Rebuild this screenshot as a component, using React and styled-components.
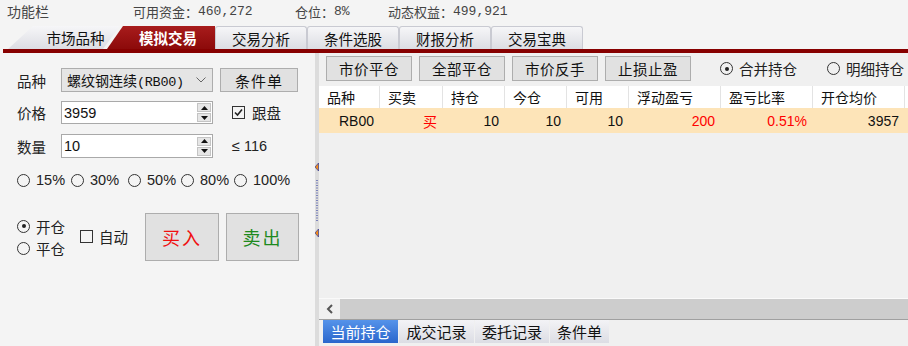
import styled, { createGlobalStyle, css } from "styled-components";

const GlobalStyle = createGlobalStyle`
  html, body { margin: 0; padding: 0; background: #f4f4f4; }
  body { font-family: "Noto Sans CJK SC", "Liberation Sans", sans-serif; color: #111; }
`;

const Page = styled.div`
  width: 908px;
  height: 346px;
  overflow: hidden;
  display: flex;
  flex-direction: column;
  background: #f4f4f4;
`;

/* ---- top info bar ---- */
const TopBar = styled.div`
  height: 22px;
  display: flex;
  align-items: center;
  padding-left: 7px;
  font-size: 13px;
  color: #444;
`;
const TopItem = styled.div`
  width: ${(p) => (p.$w ? p.$w + "px" : "auto")};
  font-size: ${(p) => p.$fs || 13}px;
  white-space: nowrap;
  display: flex;
  align-items: center;
`;
const Num = styled.span`
  font-family: "Liberation Mono", monospace;
  font-size: 13px;
  color: #444;
`;

/* ---- main tabs ---- */
const TabStrip = styled.div`
  margin: 4px 0 0 3px;
  padding-left: 5px;
  height: 23px;
  display: flex;
  align-items: stretch;
  border-bottom: 4px solid #870000;
`;
const Tab = styled.div`
  display: flex;
  align-items: center;
  justify-content: center;
  font-size: 14.5px;
  color: #111;
  width: ${(p) => p.$w}px;
  box-sizing: border-box;
  background: linear-gradient(#f6f6f8, #dcdde3);
  border: 1px solid #c9cad2;
  border-bottom: none;
  border-radius: 3px 3px 0 0;
  ${(p) =>
    p.$first &&
    css`
      border: none;
      border-radius: 0;
      padding-left: 20px;
      clip-path: polygon(25px 0, 112px 0, 95px 100%, 0 100%);
    `}
  ${(p) =>
    p.$active &&
    css`
      border: none;
      border-radius: 0;
      margin-left: -16px;
      padding-left: 14px;
      color: #fff;
      font-weight: bold;
      background: linear-gradient(#a81c1c, #8c0a0a);
      clip-path: polygon(16px 0, 100% 0, 100% 100%, 0 100%);
    `}
`;

/* ---- body ---- */
const Main = styled.div`
  flex: 1;
  display: flex;
  min-height: 0;
`;

const LeftPanel = styled.div`
  width: 315px;
  box-sizing: border-box;
  padding: 15px 0 0 17px;
  background: #f4f4f4;
  display: flex;
  flex-direction: column;
`;
const Row = styled.div`
  display: flex;
  align-items: ${(p) => p.$align || "center"};
  height: ${(p) => p.$h}px;
  margin-top: ${(p) => p.$mt || 0}px;
`;
const Label = styled.div`
  width: 44px;
  font-size: 14.5px;
  color: #222;
`;
const Select = styled.div`
  width: 152px;
  height: 24px;
  box-sizing: border-box;
  border: 1px solid #adadad;
  background: #e5e5e5;
  display: flex;
  align-items: center;
  justify-content: space-between;
  padding: 0 6px 0 5px;
  font-size: 14px;
  color: #111;
`;
const Code = styled.span`
  font-family: "Liberation Mono", monospace;
  font-size: 13.5px;
  letter-spacing: -0.3px;
`;
const Field = styled.div`
  width: 152px;
  height: ${(p) => p.$h}px;
  box-sizing: border-box;
  border: 1px solid #a9a9a9;
  background: #fff;
  display: flex;
  align-items: center;
  justify-content: space-between;
  padding: 0 1px 0 2px;
  font-family: "Liberation Sans", sans-serif;
  font-size: 14.5px;
  color: #111;
`;
const Spin = styled.div`
  width: 14px;
  height: 19px;
  display: flex;
  flex-direction: column;
  gap: 1px;
`;
const SpinBtn = styled.div`
  flex: 1;
  background: #e6e6e6;
  border: 1px solid #c4c4c4;
  display: flex;
  align-items: center;
  justify-content: center;
`;
const Button = styled.div`
  box-sizing: border-box;
  width: ${(p) => p.$w}px;
  height: ${(p) => p.$h}px;
  margin-left: ${(p) => p.$ml || 0}px;
  margin-right: ${(p) => p.$mr || 0}px;
  border: 1px solid #adadad;
  background: #e1e1e1;
  display: flex;
  align-items: center;
  justify-content: center;
  font-size: ${(p) => p.$fs || 15}px;
  color: ${(p) => p.$color || "#111"};
  letter-spacing: ${(p) => p.$ls || 0}px;
  flex-shrink: 0;
`;
const Side = styled.div`
  margin-left: 19px;
  display: flex;
  align-items: center;
  gap: 7px;
  font-size: 14.5px;
  color: #222;
  font-family: "Liberation Sans", "Noto Sans CJK SC", sans-serif;
`;
const Option = styled.div`
  display: flex;
  align-items: center;
  gap: 6px;
  width: ${(p) => (p.$w ? p.$w + "px" : "auto")};
  height: ${(p) => (p.$h ? p.$h + "px" : "auto")};
  margin-top: ${(p) => p.$mt || 0}px;
  font-size: 14.5px;
  color: #222;
  font-family: "Liberation Sans", "Noto Sans CJK SC", sans-serif;
  flex-shrink: 0;
`;
const Circle = styled.span`
  width: 11px;
  height: 11px;
  border: 1px solid #333;
  border-radius: 50%;
  display: flex;
  align-items: center;
  justify-content: center;
  flex-shrink: 0;
  &::after {
    content: "";
    width: 4px;
    height: 4px;
    border-radius: 50%;
    background: ${(p) => (p.$on ? "#222" : "transparent")};
  }
`;
const Box = styled.span`
  width: 11px;
  height: 11px;
  border: 1px solid #333;
  display: flex;
  align-items: center;
  justify-content: center;
  flex-shrink: 0;
`;
const RadioCol = styled.div`
  width: 63px;
  padding-top: 2px;
  display: flex;
  flex-direction: column;
`;

const Divider = styled.div`
  width: 4px;
  background: #dcdcdc;
  flex-shrink: 0;
  display: flex;
  flex-direction: column;
`;

/* ---- right panel ---- */
const RightPanel = styled.div`
  flex: 1;
  background: #f0f0f0;
  display: flex;
  flex-direction: column;
  min-width: 0;
`;
const Toolbar = styled.div`
  height: 33px;
  box-sizing: border-box;
  padding: 3px 0 0 7px;
  display: flex;
  align-items: flex-start;
`;
const ToolRadios = styled.div`
  display: flex;
  align-items: center;
  height: 25px;
  margin-left: 29px;
`;
const TableRow = styled.div`
  display: flex;
  height: ${(p) => p.$h}px;
  background: ${(p) => p.$bg};
`;
const HeadCell = styled.div`
  width: ${(p) => p.$w}px;
  box-sizing: border-box;
  border-right: 1px solid #e3e3e3;
  padding-left: 8px;
  display: flex;
  align-items: center;
  font-size: 14px;
  color: #111;
  flex-shrink: 0;
`;
const Cell = styled.div`
  width: ${(p) => p.$w}px;
  box-sizing: border-box;
  padding-right: 6px;
  display: flex;
  align-items: center;
  justify-content: flex-end;
  font-family: "Liberation Sans", "Noto Sans CJK SC", sans-serif;
  font-size: 14px;
  color: ${(p) => (p.$red ? "#ff0000" : "#111")};
  flex-shrink: 0;
`;
const Spacer = styled.div`
  flex: ${(p) => p.$fixed ? `0 0 ${p.$fixed}px` : 1};
`;
const ScrollBar = styled.div`
  height: 22px;
  box-sizing: border-box;
  display: flex;
  border-top: 1px solid #fafafa;
  border-bottom: 1px solid #a0a0a0;
`;
const ScrollArrow = styled.div`
  width: 21px;
  background: #f0f0f0;
  display: flex;
  align-items: center;
  justify-content: center;
`;
const ScrollTrack = styled.div`
  flex: 1;
  background: #cdcdcd;
`;
const BottomTabs = styled.div`
  height: 23px;
  display: flex;
  padding-left: 4px;
  gap: 1px;
`;
const BottomTab = styled.div`
  width: ${(p) => p.$w}px;
  display: flex;
  align-items: center;
  justify-content: center;
  font-size: 15px;
  color: ${(p) => (p.$active ? "#fff" : "#111")};
  background: ${(p) =>
    p.$active
      ? "linear-gradient(#5593ea, #2a66cc)"
      : "linear-gradient(#f3f3f6, #dcdde4)"};
`;

const Chevron = () => (
  <svg width="10" height="6" viewBox="0 0 10 6">
    <path d="M0.5 0.5 L5 5 L9.5 0.5" fill="none" stroke="#666" strokeWidth="1" />
  </svg>
);

const Tri = ({ up }) => (
  <svg width="7" height="4" viewBox="0 0 7 4">
    <path d={up ? "M3.5 0 L7 4 L0 4 Z" : "M0 0 L7 0 L3.5 4 Z"} fill="#111" />
  </svg>
);

const SpinBox = ({ value, h }) => (
  <Field $h={h}>
    <span>{value}</span>
    <Spin>
      <SpinBtn>
        <Tri up />
      </SpinBtn>
      <SpinBtn>
        <Tri />
      </SpinBtn>
    </Spin>
  </Field>
);

const Check = ({ on }) => (
  <Box>
    {on && (
      <svg width="9" height="9" viewBox="0 0 9 9">
        <path d="M1 4.5 L3.5 7 L8 1.5" fill="none" stroke="#222" strokeWidth="1.6" />
      </svg>
    )}
  </Box>
);

const columns = [
  { t: "品种", w: 61, v: "RB00" },
  { t: "买卖", w: 63, v: "买", red: true },
  { t: "持仓", w: 62, v: "10" },
  { t: "今仓", w: 62, v: "10" },
  { t: "可用", w: 62, v: "10" },
  { t: "浮动盈亏", w: 92, v: "200", red: true },
  { t: "盈亏比率", w: 92, v: "0.51%", red: true },
  { t: "开仓均价", w: 92, v: "3957" },
  { t: "", w: 3, v: "" },
];

export default function App() {
  return (
    <Page>
      <GlobalStyle />
      <TopBar>
        <TopItem $w={126} $fs={14}>功能栏</TopItem>
        <TopItem $w={162}>
          可用资金：<Num>460,272</Num>
        </TopItem>
        <TopItem $w={93}>
          仓位：<Num>8%</Num>
        </TopItem>
        <TopItem>
          动态权益：<Num>499,921</Num>
        </TopItem>
      </TopBar>

      <TabStrip>
        <Tab $first $w={115}>市场品种</Tab>
        <Tab $active $w={108}>模拟交易</Tab>
        <Tab $w={92}>交易分析</Tab>
        <Tab $w={92}>条件选股</Tab>
        <Tab $w={92}>财报分析</Tab>
        <Tab $w={92}>交易宝典</Tab>
      </TabStrip>

      <Main>
        <LeftPanel>
          <Row $h={24}>
            <Label>品种</Label>
            <Select>
              <span>
                螺纹钢连续<Code>(RB00)</Code>
              </span>
              <Chevron />
            </Select>
            <Button $w={78} $h={24} $ml={7} $fs={15} $ls={1}>
              条件单
            </Button>
          </Row>
          <Row $h={23} $mt={9}>
            <Label>价格</Label>
            <SpinBox value="3959" h={23} />
            <Side>
              <Check on />
              <span>跟盘</span>
            </Side>
          </Row>
          <Row $h={24} $mt={10}>
            <Label>数量</Label>
            <SpinBox value="10" h={24} />
            <Side>≤ 116</Side>
          </Row>
          <Row $h={18} $mt={13}>
            <Option $w={54}>
              <Circle />
              15%
            </Option>
            <Option $w={57}>
              <Circle />
              30%
            </Option>
            <Option $w={53}>
              <Circle />
              50%
            </Option>
            <Option $w={53}>
              <Circle />
              80%
            </Option>
            <Option>
              <Circle />
              100%
            </Option>
          </Row>
          <Row $h={48} $mt={24} $align="flex-start">
            <RadioCol>
              <Option $h={22}>
                <Circle $on />
                开仓
              </Option>
              <Option $h={22}>
                <Circle />
                平仓
              </Option>
            </RadioCol>
            <Option $w={65} $h={22} $mt={12}>
              <Check />
              自动
            </Option>
            <Button $w={74} $h={48} $fs={18} $ls={2} $color="#f01010">
              买入
            </Button>
            <Button $w={73} $h={48} $ml={7} $fs={18} $ls={2} $color="#1e8a1e">
              卖出
            </Button>
          </Row>
        </LeftPanel>

        <Divider>
          <svg width="4" height="293" viewBox="0 0 4 293">
            <path d="M0 114 L3.5 110 L3.5 118 Z" fill="#f08a1c" stroke="#1a2a9a" strokeWidth="0.6" />
            <path d="M2 127 L2 169" stroke="#1a2a9a" strokeWidth="1" strokeDasharray="1 1.5" />
            <path d="M0 180 L3.5 176 L3.5 184 Z" fill="#f08a1c" stroke="#1a2a9a" strokeWidth="0.6" />
          </svg>
        </Divider>

        <RightPanel>
          <Toolbar>
            <Button $w={86} $h={25} $mr={7} $fs={14.5} $ls={0.5}>市价平仓</Button>
            <Button $w={86} $h={25} $mr={7} $fs={14.5} $ls={0.5}>全部平仓</Button>
            <Button $w={86} $h={25} $mr={7} $fs={14.5} $ls={0.5}>市价反手</Button>
            <Button $w={86} $h={25} $fs={14.5} $ls={0.5}>止损止盈</Button>
            <ToolRadios>
              <Option $w={107}>
                <Circle $on />
                合并持仓
              </Option>
              <Option>
                <Circle />
                明细持仓
              </Option>
            </ToolRadios>
          </Toolbar>

          <TableRow $h={22} $bg="#fff">
            {columns.map((c, i) => (
              <HeadCell key={i} $w={c.w}>
                {c.t}
              </HeadCell>
            ))}
          </TableRow>
          <TableRow $h={25} $bg="#fde4b8">
            {columns.map((c, i) => (
              <Cell key={i} $w={c.w} $red={c.red}>
                {c.v}
              </Cell>
            ))}
          </TableRow>
          <Spacer />
          <ScrollBar>
            <ScrollArrow>
              <svg width="7" height="10" viewBox="0 0 7 10">
                <path d="M6 1 L2 5 L6 9" fill="none" stroke="#555" strokeWidth="2" />
              </svg>
            </ScrollArrow>
            <ScrollTrack />
          </ScrollBar>
          <BottomTabs>
            <BottomTab $active $w={75}>当前持仓</BottomTab>
            <BottomTab $w={75}>成交记录</BottomTab>
            <BottomTab $w={74}>委托记录</BottomTab>
            <BottomTab $w={59}>条件单</BottomTab>
          </BottomTabs>
          <Spacer $fixed={3} />
        </RightPanel>
      </Main>
    </Page>
  );
}
